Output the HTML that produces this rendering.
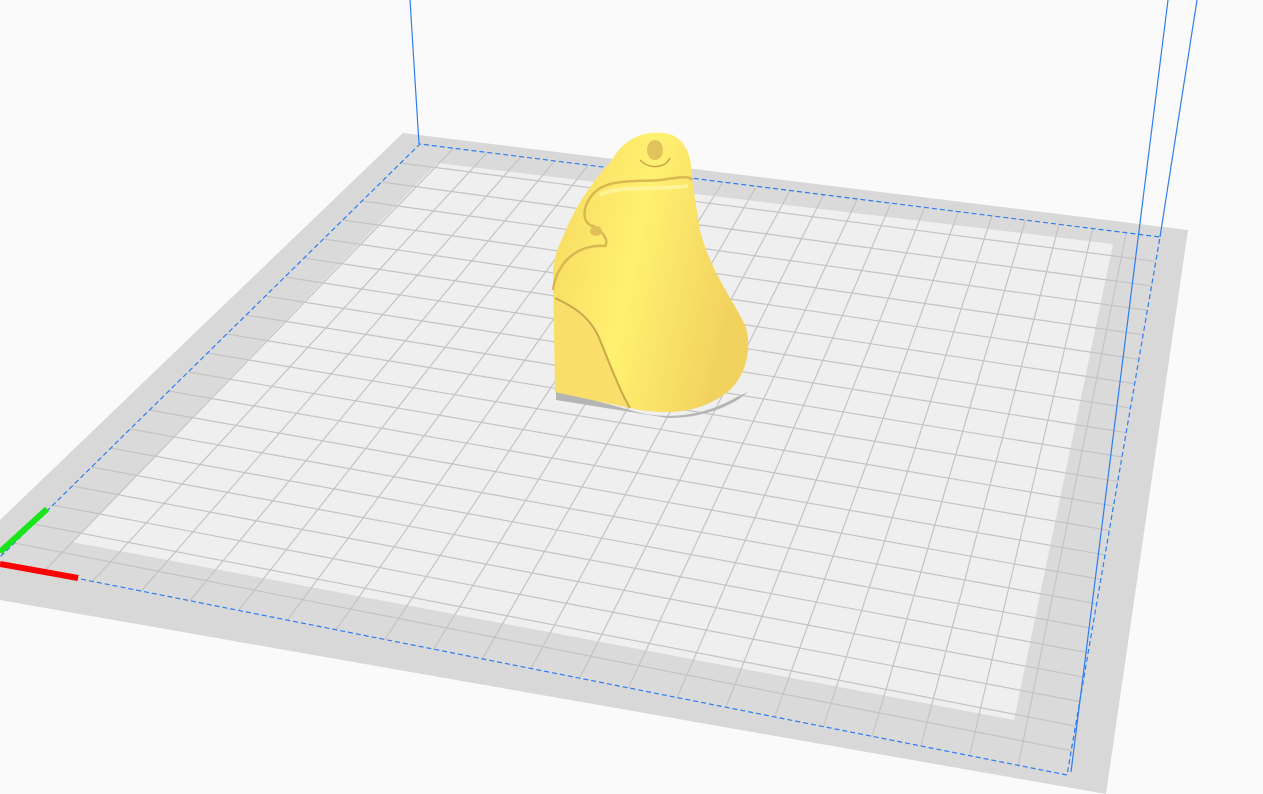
<!DOCTYPE html>
<html><head><meta charset="utf-8"><style>
html,body{margin:0;padding:0;background:#fafafa;overflow:hidden}
svg{display:block}
</style></head><body>
<svg id="s" width="1263" height="794" viewBox="0 0 1263 794" xmlns="http://www.w3.org/2000/svg">
<rect width="1263" height="794" fill="#fafafa"/>
<polygon points="403,133 1188,230 1106,794 0,600 0,520" fill="#d8d8d8"/>
<polygon points="420,144 1160,237 1067,775 -5,562" fill="#dadada"/>
<polygon points="437,163 1113,244 1014,720 72,542" fill="#efefef"/>
<g id="grid" stroke="#c4c4c4" stroke-width="1.2" fill="none"></g>
<path d="M556,390 L630,410 C660,420 700,418 735,398 L748,392 C730,408 700,418 668,418 L556,400 Z" fill="#b5b5b5"/>
<g stroke="#2e7df5" stroke-width="1.2" fill="none">
<line x1="410" y1="0" x2="419" y2="144"/>
<line x1="1168" y1="0" x2="1071" y2="772"/>
<line x1="1197" y1="0" x2="1160" y2="237"/>
<polyline points="-5,562 420,144 1160,237 1067,775 -5,562" stroke-dasharray="5,3"/>
</g>
<line x1="0" y1="552" x2="47" y2="509" stroke="#18e618" stroke-width="6"/>
<line x1="0" y1="564" x2="78" y2="578" stroke="#f00" stroke-width="6"/>
<defs>
<linearGradient id="g1" x1="0" y1="0" x2="1" y2="0.3">
<stop offset="0" stop-color="#f6d860"/>
<stop offset="0.5" stop-color="#fff170"/>
<stop offset="1" stop-color="#f2d25e"/>
</linearGradient>
</defs>
<path d="M612,160 C625,136 650,128 672,135 C688,142 692,160 692,180 L700,230 C710,270 730,295 745,325 C752,345 748,372 730,390 C712,405 690,412 668,412 C650,412 640,410 630,408 L555,392 L553,270 C555,250 562,240 565,232 C572,215 585,190 612,160 Z" fill="url(#g1)"/>
<path d="M555,392 L630,408 C622,395 612,370 600,340 C590,315 570,305 555,300 Z" fill="#f9de6a"/>
<path d="M630,408 C622,395 612,370 600,340 C590,315 570,305 555,298" stroke="#caa84a" stroke-width="2" fill="none"/>
<path d="M553,290 C556,268 572,244 605,246 C610,240 600,228 590,225 C582,220 582,205 595,192 C610,178 640,182 660,180 C675,178 690,175 692,180" stroke="#d9b850" stroke-width="2.5" fill="none"/>
<path d="M600,195 C615,186 650,190 688,186" stroke="#fff6a8" stroke-width="4" fill="none" opacity="0.7"/>
<ellipse cx="655" cy="150" rx="8" ry="10" fill="#e2c25a"/>
<path d="M640,160 C650,170 665,168 670,158" stroke="#c9a64a" stroke-width="1.5" fill="none"/>
<ellipse cx="596" cy="231" rx="6" ry="5" fill="#e0bf58"/>
</svg>
<script>
var g=document.getElementById('grid');
var A=[420,144],B=[1160,237],C=[1067,775],D=[-5,562];
function L(p,q,t){return [p[0]+(q[0]-p[0])*t,p[1]+(q[1]-p[1])*t];}
var n=22,s='';
for(var i=1;i<n;i++){var t=i/n;
 var p=L(A,B,t),q=L(D,C,t);s+='<line x1="'+p[0]+'" y1="'+p[1]+'" x2="'+q[0]+'" y2="'+q[1]+'"/>';
 p=L(A,D,t);q=L(B,C,t);s+='<line x1="'+p[0]+'" y1="'+p[1]+'" x2="'+q[0]+'" y2="'+q[1]+'"/>';}
g.innerHTML=s;
</script>
</body></html>
